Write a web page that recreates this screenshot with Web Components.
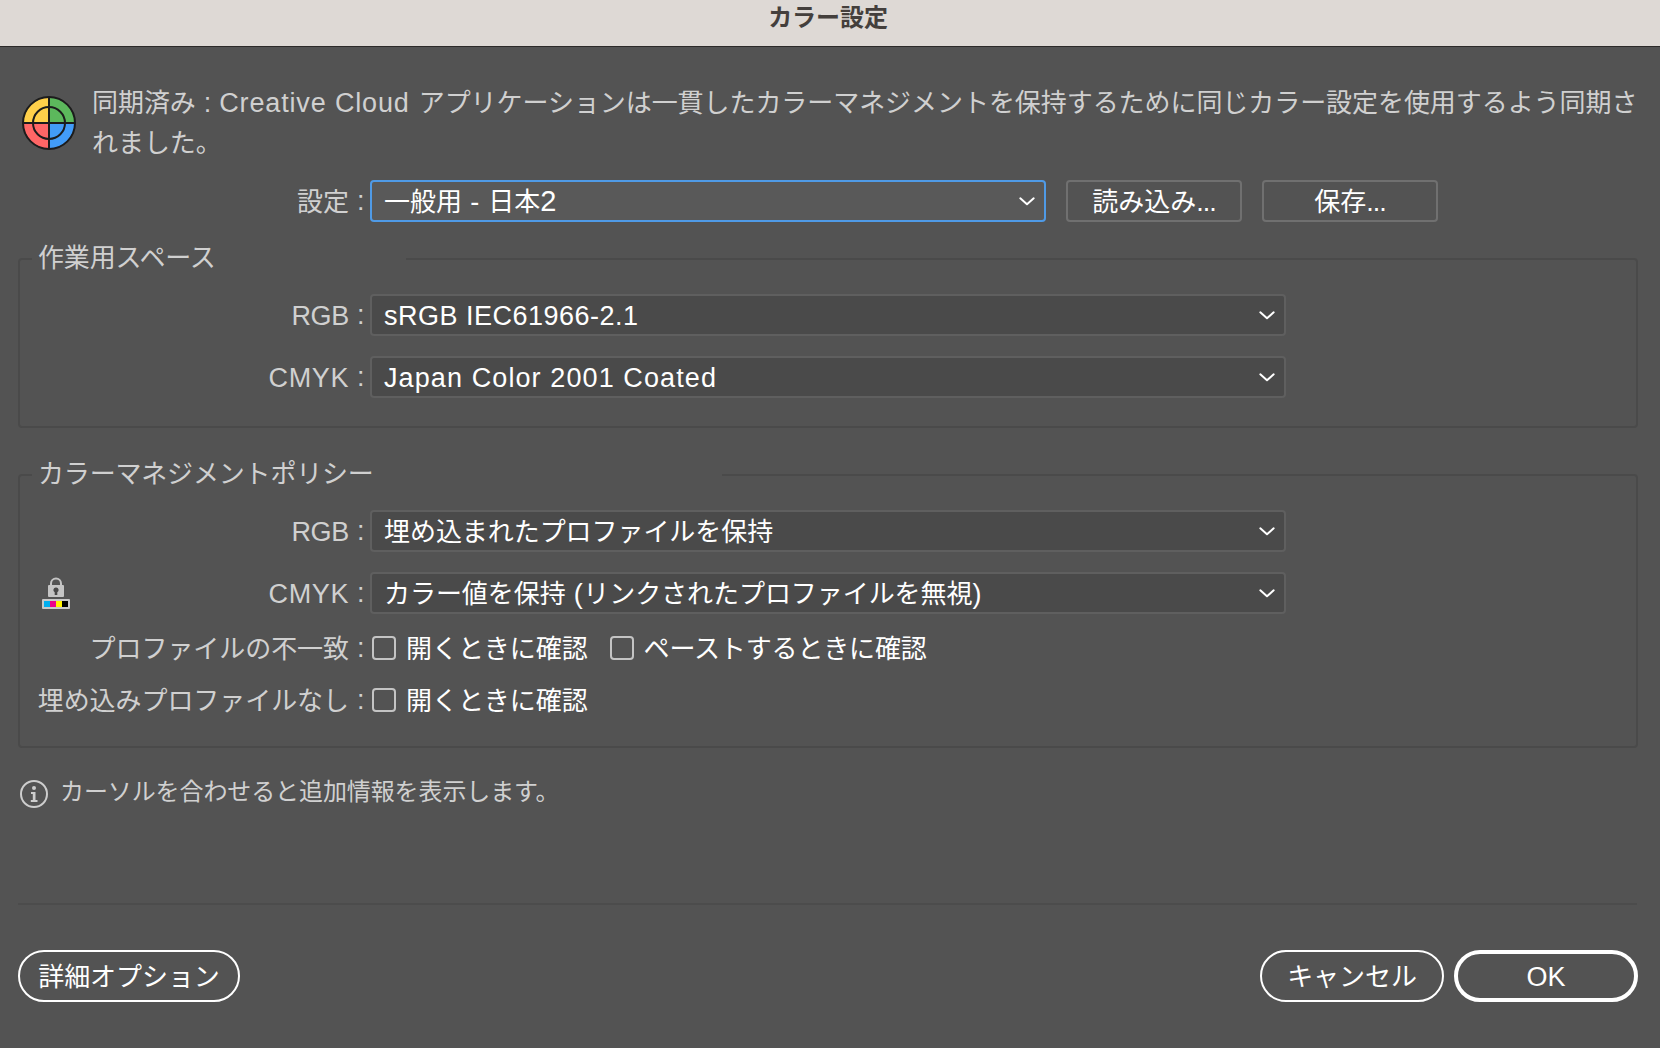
<!DOCTYPE html>
<html lang="ja">
<head>
<meta charset="utf-8">
<title>カラー設定</title>
<style>
  body {
    margin: 0;
    background: #535353;
    font-family: "Noto Sans CJK JP", sans-serif;
  }
</style>
</head>
<body>
<color-settings></color-settings>

<script>
// Small helper: every element here renders its markup once into an open root.
class BaseElement extends HTMLElement {
  constructor() {
    super();
    this.attachShadow({ mode: 'open' });
    this.shadowRoot.innerHTML = this.template();
  }
}

class TitleBar extends BaseElement {
  template() {
    return `
      <style>
        :host {
          display: block;
          height: 46px;
          box-sizing: border-box;
          line-height: 32px;
          padding-right: 4px;
          background: #ded9d5;
          color: #443f3c;
          font-size: 24px;
          font-weight: 700;
          text-align: center;
        }
      </style>
      <slot></slot>
    `;
  }
}
customElements.define('title-bar', TitleBar);

class ColorWheel extends BaseElement {
  template() {
    return `
      <style>
        :host { display: block; width: 54px; height: 54px; white-space: normal; }
        svg { display: block; }
      </style>
      <svg width="54" height="54" viewBox="0 0 54 54">
        <path d="M27 27V1.500A25.500 25.500 0 0 0 1.500 27Z" fill="#ffd04a"/>
        <path d="M27 27V1.500A25.500 25.500 0 0 1 52.500 27Z" fill="#5cb85c"/>
        <path d="M27 27V52.500A25.500 25.500 0 0 1 1.500 27Z" fill="#ff6666"/>
        <path d="M27 27V52.500A25.500 25.500 0 0 0 52.500 27Z" fill="#429cf8"/>
        <g fill="none" stroke="#1c1c1c" stroke-width="2">
          <circle cx="27" cy="27" r="26"/>
          <circle cx="27" cy="27" r="16"/>
          <path d="M27 1V53M1 27H53"/>
        </g>
      </svg>
    `;
  }
}
customElements.define('color-wheel', ColorWheel);

class LockIcon extends BaseElement {
  template() {
    return `
      <style>
        :host { display: block; width: 28px; height: 32px; white-space: normal; }
        svg { display: block; }
      </style>
      <svg width="28" height="32" viewBox="0 0 28 32">
        <path d="M9 9V6.500a5 5 0 0 1 10 0V9" fill="none" stroke="#c4c4c4" stroke-width="2"/>
        <rect x="6" y="8" width="16" height="12" rx="1" fill="#c4c4c4"/>
        <path d="M14 10.500a2.500 2.500 0 0 1 1.300 4.700V18h-2.600v-2.800a2.500 2.500 0 0 1 1.300-4.700Z" fill="#484848"/>
        <rect y="22" width="28" height="10" rx="1" fill="#c8c8c8"/>
        <rect x="2" y="24" width="6" height="6" fill="#00aeef"/>
        <rect x="8" y="24" width="6" height="6" fill="#ec008c"/>
        <rect x="14" y="24" width="6" height="6" fill="#fff200"/>
        <rect x="20" y="24" width="6" height="6" fill="#000"/>
      </svg>
    `;
  }
}
customElements.define('lock-icon', LockIcon);

class InfoIcon extends BaseElement {
  template() {
    return `
      <style>
        :host { display: block; width: 28px; height: 28px; }
        svg { display: block; }
      </style>
      <svg width="28" height="28" viewBox="0 0 28 28">
        <circle cx="14" cy="14" r="13" fill="none" stroke="#cdcdcd" stroke-width="2"/>
        <circle cx="14" cy="8" r="2" fill="#cdcdcd"/>
        <path d="M11 12h4.500v8H17.500v2H10.800v-2H12.800v-6H11Z" fill="#cdcdcd"/>
      </svg>
    `;
  }
}
customElements.define('info-icon', InfoIcon);

class DropDown extends BaseElement {
  template() {
    return `
      <style>
        :host {
          display: flex;
          align-items: center;
          justify-content: space-between;
          box-sizing: border-box;
          width: 916px;
          height: 42px;
          padding: 0 9px 0 12px;
          border: 2px solid #5f5f5f;
          border-radius: 4px;
          background: #4a4a4a;
          color: #fff;
          line-height: 36px;
          white-space: pre;
        }
        :host([focused]) {
          width: 676px;
          border-color: #4f9ae6;
          background: #595959;
        }
        span { display: block; height: 38px; }
        svg { display: block; }
      </style>
      <span><slot></slot></span>
      <svg width="16" height="10" viewBox="0 0 16 10">
        <path d="M1.300 2.300L8 8.300L14.700 2.300" fill="none" stroke="#fff" stroke-width="2" stroke-linecap="round" stroke-linejoin="round"/>
      </svg>
    `;
  }
}
customElements.define('drop-down', DropDown);

class CheckBox extends BaseElement {
  template() {
    return `
      <style>
        :host { display: flex; align-items: center; gap: 10px; color: #fff; white-space: pre; }
        i {
          box-sizing: border-box;
          width: 24px;
          height: 24px;
          border: 2px solid #c4c4c4;
          border-radius: 4px;
        }
        span { line-height: 38px; padding-bottom: 3px; }
      </style>
      <i></i><span><slot></slot></span>
    `;
  }
}
customElements.define('check-box', CheckBox);

// kinds: default (square), "pill" and "pill primary"
class PushButton extends BaseElement {
  template() {
    return `
      <style>
        :host {
          display: flex;
          align-items: center;
          justify-content: center;
          box-sizing: border-box;
          width: 176px;
          height: 42px;
          border: 2px solid #707070;
          border-radius: 4px;
          color: #fff;
          line-height: 36px;
          white-space: pre;
        }
        :host([kind~="pill"]) {
          width: var(--button-width, 184px);
          height: 52px;
          border-color: #fff;
          border-radius: 26px;
        }
        :host([kind~="primary"]) { border-width: 4px; }
        span { display: block; height: 38px; }
      </style>
      <span><slot></slot></span>
    `;
  }
}
customElements.define('push-button', PushButton);

class FieldRow extends BaseElement {
  template() {
    return `
      <style>
        :host { display: flex; align-items: center; height: 42px; }
        .label {
          display: flex;
          align-items: center;
          box-sizing: border-box;
          width: var(--label-width, 350px);
          padding-right: 6px;
          white-space: pre;
        }
        ::slotted([slot="icon"]) { margin-left: 22px; }
        .text { height: 42px; margin-left: auto; line-height: 40px; }
        .colon { width: 7px; margin-left: 8px; font: 27px/44px "Liberation Sans", sans-serif; }
        .controls { display: flex; align-items: center; gap: 20px; }
      </style>
      <div class="label">
        <slot name="icon"></slot>
        <span class="text"><slot name="label"></slot></span><span class="colon">:</span>
      </div>
      <div class="controls"><slot></slot></div>
    `;
  }
}
customElements.define('field-row', FieldRow);

class GroupBox extends BaseElement {
  template() {
    return `
      <style>
        :host {
          display: block;
          position: relative;
          box-sizing: border-box;
          padding-top: 34px;
          border: 2px solid #4a4a4a;
          border-radius: 4px;
        }
        /* the legend sits on the top border and cuts it */
        .legend {
          position: absolute;
          top: -24px;
          left: 12px;
          box-sizing: border-box;
          width: var(--legend-width);
          padding-left: 6px;
          background: #535353;
          line-height: 40px;
          letter-spacing: -.18px;
          white-space: nowrap;
        }
      </style>
      <div class="legend"><slot name="legend"></slot></div>
      <slot></slot>
    `;
  }
}
customElements.define('group-box', GroupBox);

class ColorSettings extends BaseElement {
  template() {
    return `
      <style>
        :host {
          display: flex;
          flex-direction: column;
          box-sizing: border-box;
          height: 1048px;
          background: #535353;
          color: #d0d0d0;
          font-size: 26px;
          letter-spacing: -.06px;
        }
        .en { font-family: "Liberation Sans", sans-serif; font-size: 27px; line-height: 1; }
        main {
          display: flex;
          flex-direction: column;
          flex: 1;
          padding: 34px 22px 46px 18px;
          border-top: 1px solid #2c2a29;
        }
        .sync { display: flex; line-height: 40px; white-space: nowrap; }
        .sync color-wheel { margin: 15px 16px 0 4px; }
        .preset { --label-width: 352px; margin-top: 19px; }
        .spaces { --legend-width: 374px; height: 170px; margin-top: 36px; }
        .policy { --legend-width: 690px; height: 274px; margin-top: 46px; }
        .next { margin-top: 20px; }
        .checks { margin-top: 13px; }
        .checks + .checks { margin-top: 10px; }
        .checks check-box:first-of-type { margin-left: 2px; }
        .checks check-box + check-box { margin-left: 2px; letter-spacing: -.15px; }
        .info {
          display: flex;
          gap: 12px;
          margin: 27px 0 0 2px;
          font-size: 24px;
          line-height: 30px;
          letter-spacing: -.1px;
        }
        .info info-icon { margin-top: 5px; }
        hr { width: 1619px; height: 2px; margin: auto 0 45px; border: 0; background: #4c4c4c; }
        footer { display: flex; gap: 10px; }
        footer push-button:first-child { --button-width: 222px; margin-right: auto; }
      </style>
      <title-bar>カラー設定</title-bar>
      <main>
        <div class="sync">
          <color-wheel></color-wheel>
          <div>同期済み<span class="en" style="margin:0 8px">:</span><span class="en" style="letter-spacing:.85px">Creative Cloud</span><span style="margin-left:9px">アプリケーションは一貫したカラーマネジメントを保持するために同じカラー設定を使用するよう同期さ</span><br>れました。</div>
        </div>
        <field-row class="preset">
          <span slot="label">設定</span>
          <drop-down focused>一般用<span class="en" style="letter-spacing:.8px"> - </span>日本<span class="en" style="font-size:29px">2</span></drop-down>
          <push-button>読み込み<span class="en" style="letter-spacing:-1px">...</span></push-button>
          <push-button>保存<span class="en" style="letter-spacing:-1px">...</span></push-button>
        </field-row>

        <group-box class="spaces">
          <span slot="legend">作業用スペース</span>
          <field-row>
            <span slot="label" class="en" style="letter-spacing:-.3px">RGB</span>
            <drop-down><span class="en" style="letter-spacing:.5px">sRGB IEC61966-2.1</span></drop-down>
          </field-row>
          <field-row class="next">
            <span slot="label" class="en" style="letter-spacing:.6px">CMYK</span>
            <drop-down><span class="en" style="letter-spacing:1.1px">Japan Color 2001 Coated</span></drop-down>
          </field-row>
        </group-box>

        <group-box class="policy">
          <span slot="legend">カラーマネジメントポリシー</span>
          <field-row>
            <span slot="label" class="en" style="letter-spacing:-.3px">RGB</span>
            <drop-down>埋め込まれたプロファイルを保持</drop-down>
          </field-row>
          <field-row class="next">
            <lock-icon slot="icon"></lock-icon>
            <span slot="label" class="en" style="letter-spacing:.6px">CMYK</span>
            <drop-down>カラー値を保持<span class="en" style="letter-spacing:.6px"> (</span>リンクされたプロファイルを無視<span class="en">)</span></drop-down>
          </field-row>
          <field-row class="checks">
            <span slot="label">プロファイルの不一致</span>
            <check-box>開くときに確認</check-box>
            <check-box>ペーストするときに確認</check-box>
          </field-row>
          <field-row class="checks">
            <span slot="label">埋め込みプロファイルなし</span>
            <check-box>開くときに確認</check-box>
          </field-row>
        </group-box>

        <div class="info">
          <info-icon></info-icon>
          <span>カーソルを合わせると追加情報を表示します。</span>
        </div>

        <hr>
        <footer>
          <push-button kind="pill">詳細オプション</push-button>
          <push-button kind="pill">キャンセル</push-button>
          <push-button kind="pill primary"><span class="en">OK</span></push-button>
        </footer>
      </main>
    `;
  }
}
customElements.define('color-settings', ColorSettings);
</script>
</body>
</html>
